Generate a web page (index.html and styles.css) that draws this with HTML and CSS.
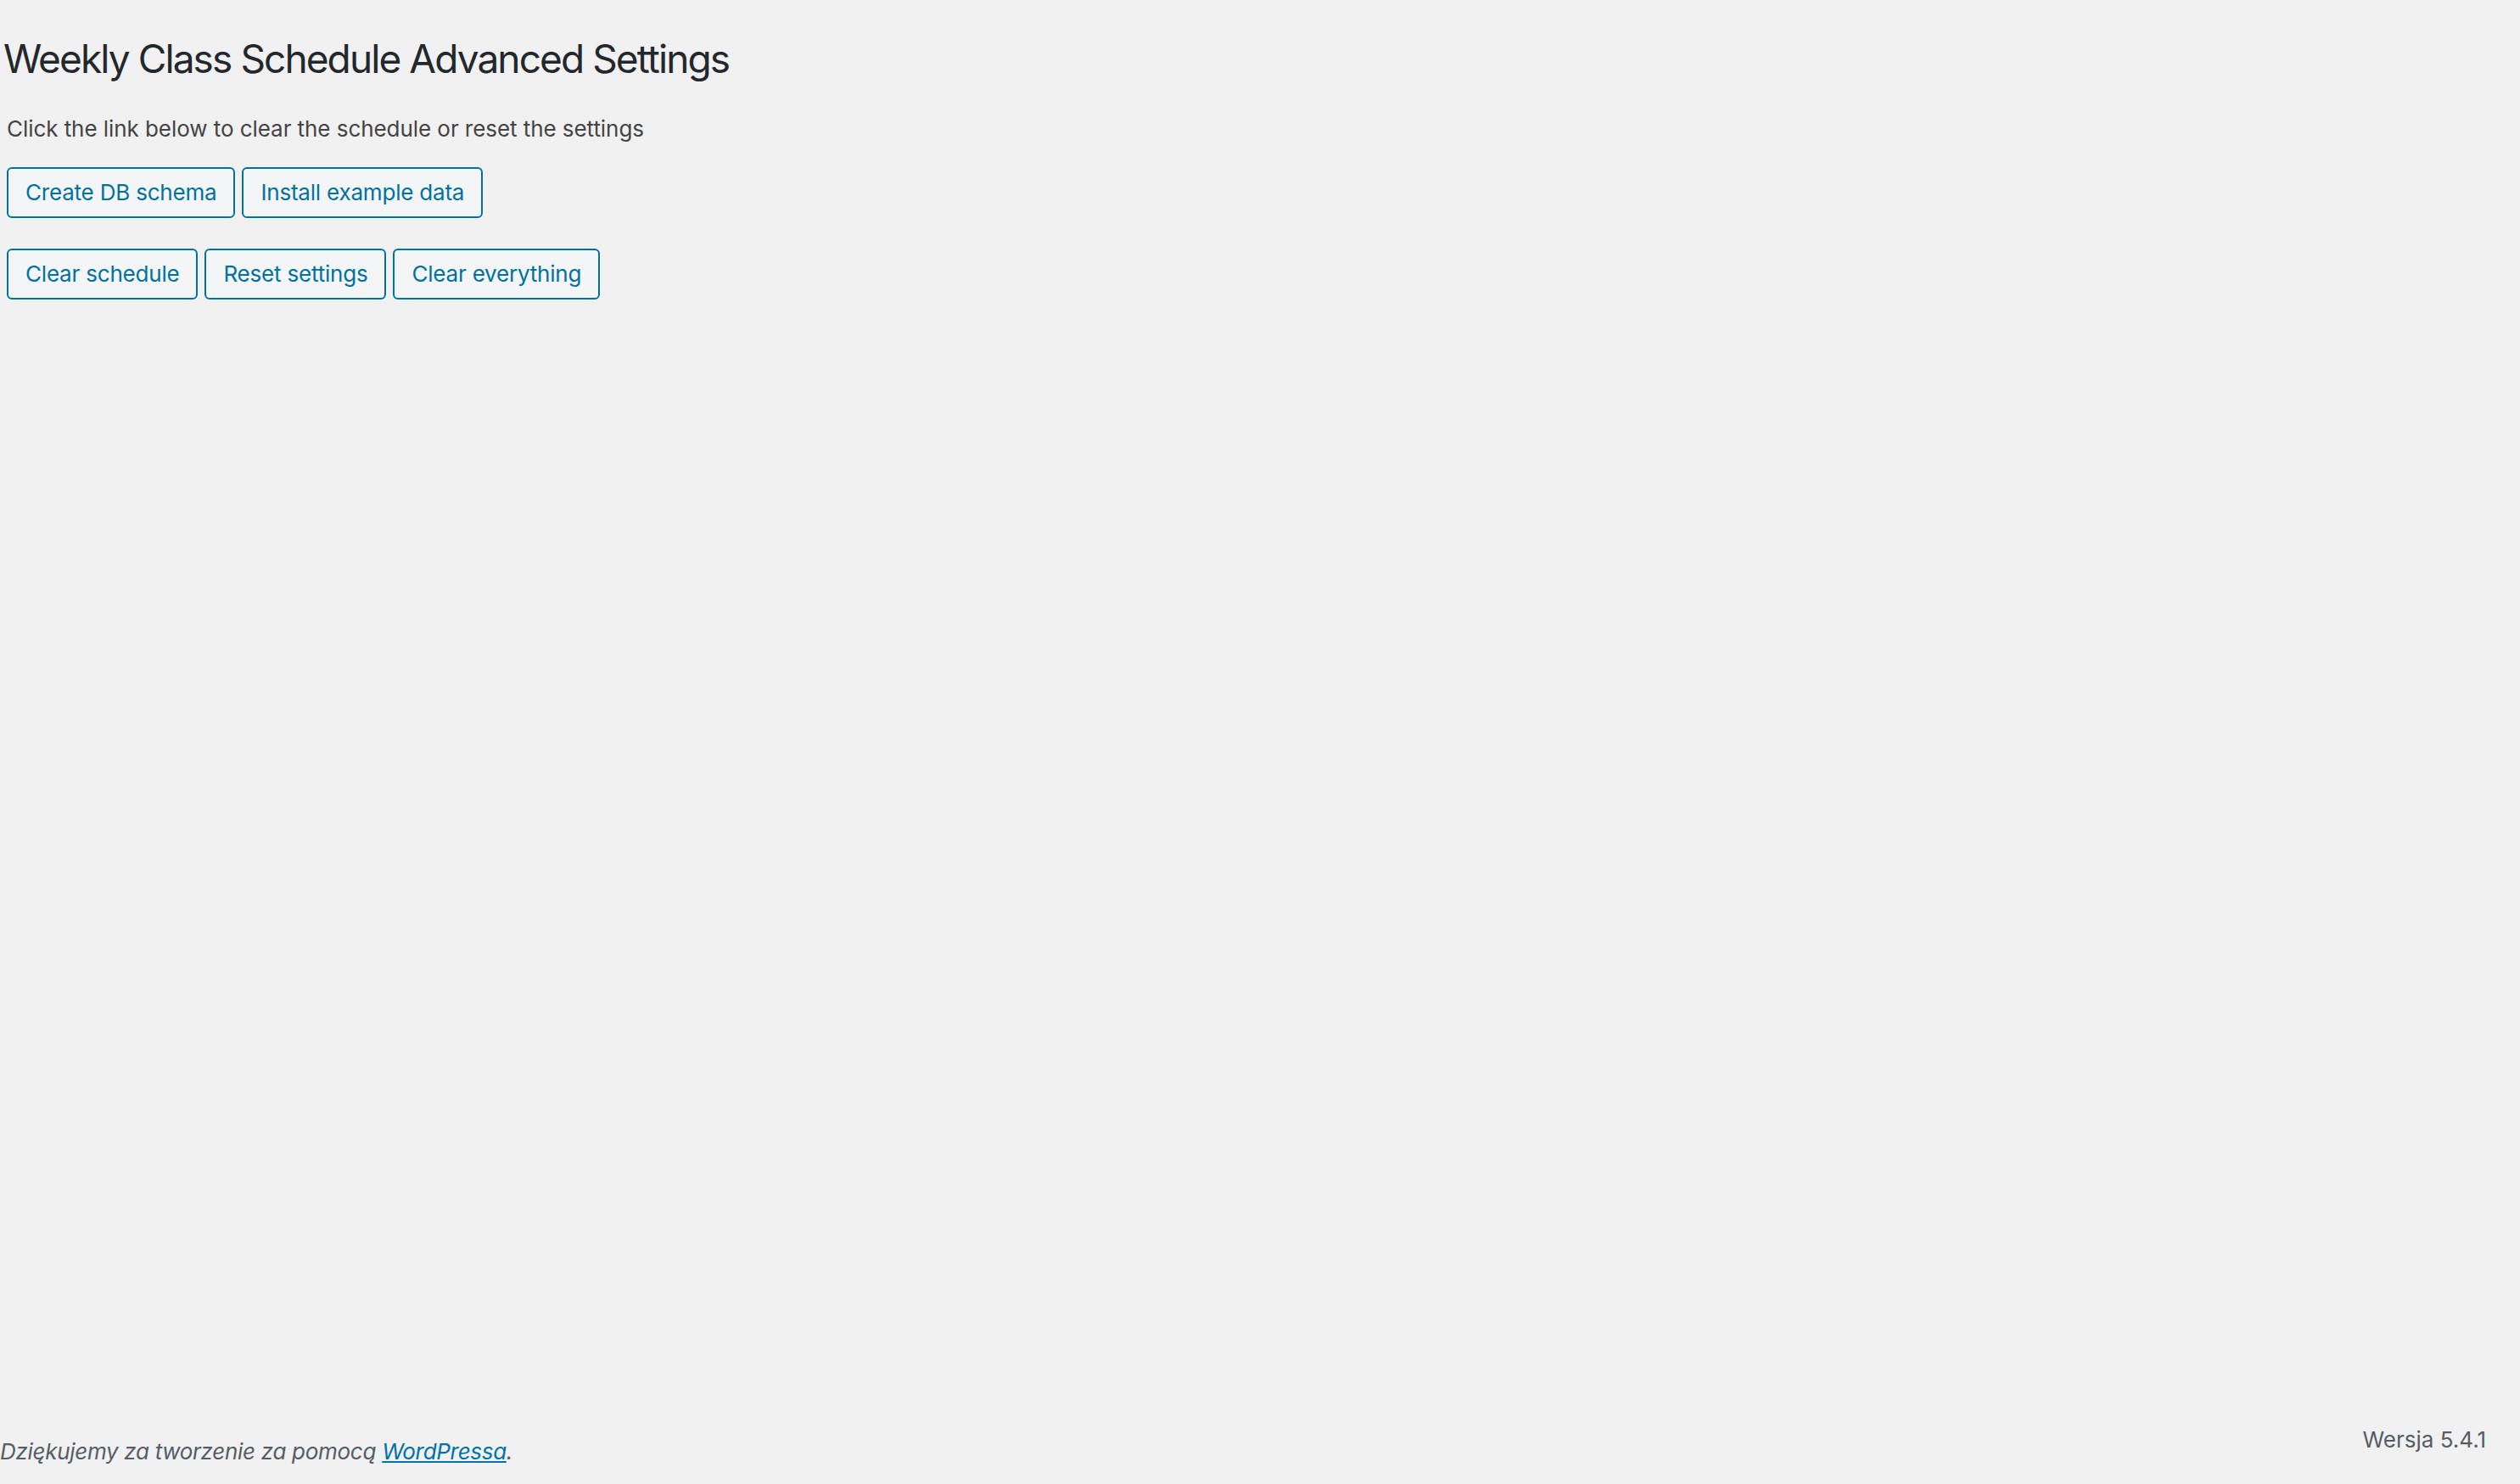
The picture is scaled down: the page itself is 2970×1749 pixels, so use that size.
FILE: index.html
```html
<!DOCTYPE html>
<html lang="pl">
<head>
<meta charset="utf-8">
<title>Weekly Class Schedule Advanced Settings</title>
<link rel="stylesheet" href="styles.css">
</head>
<body>
<div class="page">
  <main class="wrap">
    <h1 class="title">Weekly Class Schedule Advanced Settings</h1>
    <div class="content">
      <p class="intro">Click the link below to clear the schedule or reset the settings</p>
      <div class="btn-row">
        <a class="button" href="#">Create DB schema</a>
        <a class="button" href="#">Install example data</a>
      </div>
      <div class="btn-row">
        <a class="button" href="#">Clear schedule</a>
        <a class="button" href="#">Reset settings</a>
        <a class="button" href="#">Clear everything</a>
      </div>
    </div>
  </main>
  <footer class="footer">
    <p class="thanks">Dziękujemy za tworzenie za pomocą <a href="#">WordPressa</a>.</p>
    <p class="version">Wersja 5.4.1</p>
  </footer>
</div>
</body>
</html>
```
FILE: styles.css
```css
html, body {
  margin: 0;
  padding: 0;
  background: #f1f1f1;
}
body {
  font-family: Inter, "Liberation Sans", sans-serif;
  color: #444;
}
.page {
  min-height: 100vh;
  display: flex;
  flex-direction: column;
}
.wrap {
  padding: 39px 0 0 4px;
}
.title {
  margin: 0;
  font-size: 46px;
  line-height: 60px;
  font-weight: 400;
  letter-spacing: -1.9px;
  color: #23282d;
}
.content {
  padding-left: 4px;
}
.intro {
  margin: 33px 0 0 0;
  font-size: 26px;
  line-height: 40px;
  letter-spacing: -0.06px;
  color: #444;
}
.btn-row {
  display: flex;
  gap: 8px;
  margin-top: 25px;
}
.btn-row + .btn-row {
  margin-top: 36px;
}
.button {
  display: inline-block;
  box-sizing: border-box;
  height: 60px;
  line-height: 56px;
  padding: 0 20px;
  font-size: 26px;
  letter-spacing: -0.2px;
  color: #0071a1;
  border: 2px solid #0071a1;
  background: #f3f5f6;
  border-radius: 6px;
  text-decoration: none;
  white-space: nowrap;
}
.footer {
  margin-top: auto;
  display: flex;
  justify-content: space-between;
  align-items: flex-end;
  padding: 0 40px 18px 0;
  font-size: 26px;
  line-height: 40px;
  color: #555d66;
}
.footer p {
  margin: 0;
}
.thanks {
  font-style: italic;
  letter-spacing: -0.3px;
}
.thanks a {
  color: #0073aa;
}
.version {
  margin-bottom: 14px !important;
}
```
